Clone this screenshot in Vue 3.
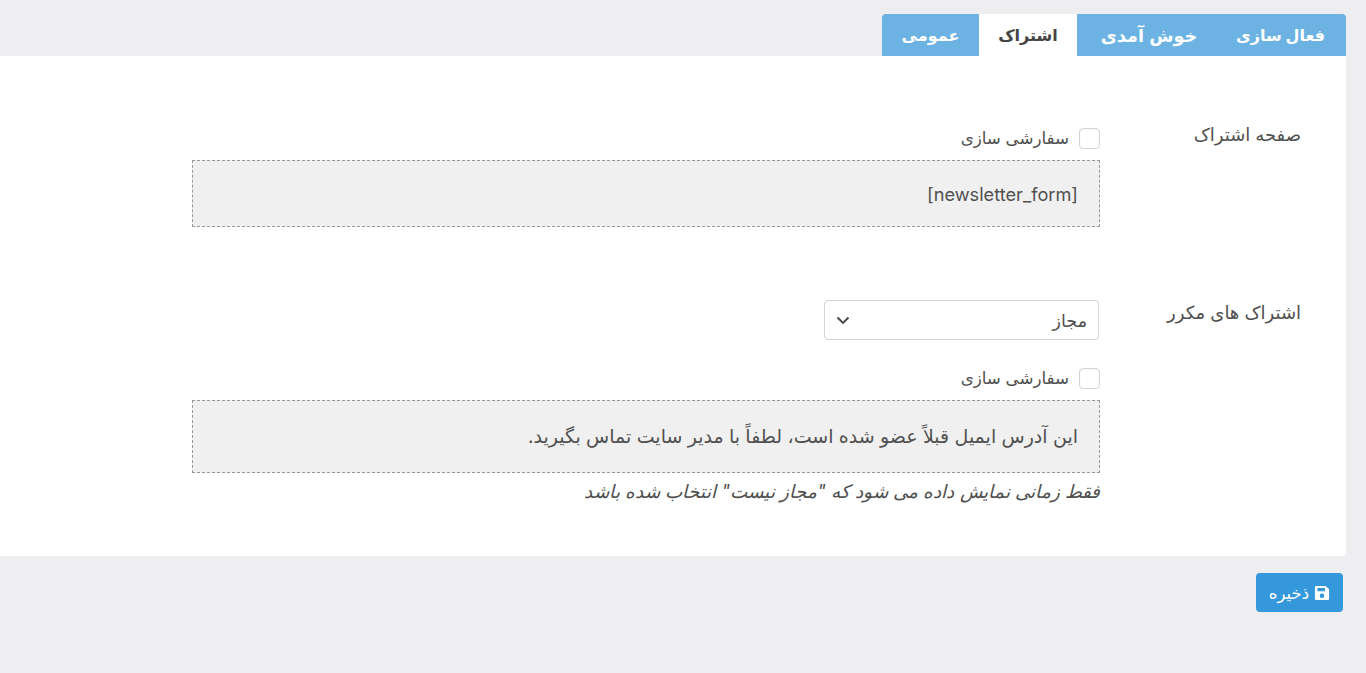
<script setup>
const tabs = [
  { name: "فعال سازی", active: false },
  { name: "خوش آمدی", active: false },
  { name: "اشتراک", active: true },
  { name: "عمومی", active: false },
]
</script>

<template>
  <div class="page" dir="rtl">
    <div class="tabs">
      <div v-for="tab in tabs" :key="tab.name" class="tab" :class="{ active: tab.active }">
        {{ tab.name }}
      </div>
    </div>

    <div class="panel">
      <div class="row first">
        <div class="label">صفحه اشتراک</div>
        <div class="field">
          <label class="check">
            <span class="box"></span>
            <span>سفارشی سازی</span>
          </label>
          <div class="preview short">[newsletter_form]</div>
        </div>
      </div>

      <div class="row second">
        <div class="label">اشتراک های مکرر</div>
        <div class="field">
          <div class="select">
            <span>مجاز</span>
            <svg width="14" height="14" viewBox="0 0 14 14" fill="none">
              <path d="M1.5 4.5 7 10l5.5-5.5" stroke="#444" stroke-width="1.8" />
            </svg>
          </div>
          <label class="check">
            <span class="box"></span>
            <span>سفارشی سازی</span>
          </label>
          <div class="preview tall">این آدرس ایمیل قبلاً عضو شده است، لطفاً با مدیر سایت تماس بگیرید.</div>
          <div class="hint">فقط زمانی نمایش داده می شود که "مجاز نیست" انتخاب شده باشد</div>
        </div>
      </div>
    </div>

    <div class="actions">
      <button class="save">
        <svg width="16" height="16" viewBox="0 0 14 14">
          <path fill="#fff" fill-rule="evenodd" d="M2 .8h8.2L13.2 3.8V12a1.2 1.2 0 0 1-1.2 1.2H2A1.2 1.2 0 0 1 .8 12V2A1.2 1.2 0 0 1 2 .8Zm1 1.9v2.8h6.6V2.7ZM7 7.4a2 2 0 1 0 0 4 2 2 0 0 0 0-4Z" />
        </svg>
        <span>ذخیره</span>
      </button>
    </div>
  </div>
</template>

<style scoped>
.page {
  height: 673px;
  background: #eeeef0;
  font-family: Inter, "DejaVu Sans", sans-serif;
  font-size: 18px;
  color: #505050;
  overflow: hidden;
}

.tabs {
  display: flex;
  margin: 14px 20px 0 0;
  height: 42px;
}

.tab {
  display: flex;
  align-items: center;
  justify-content: center;
  box-sizing: border-box;
  background: #6cb3e3;
  color: #fff;
  font-weight: bold;
  font-size: 16px;
  height: 42px;
  width: 98px;
}

.tab:nth-child(1) {
  width: 131px;
  border-top-right-radius: 4px;
}

.tab:nth-child(2) {
  width: 138px;
  padding-left: 6px;
  font-size: 17.6px;
  word-spacing: 1px;
}

.tab:nth-child(4) {
  width: 97px;
  border-top-left-radius: 4px;
}

.tab.active {
  background: #fff;
  color: #444;
}

.panel {
  margin-right: 20px;
  height: 500px;
  background: #fff;
  padding: 0 45px 0 0;
  border-bottom-right-radius: 4px;
}

.row {
  display: flex;
}

.row.first {
  padding-top: 66px;
}

.row.second {
  padding-top: 73px;
}

.label {
  width: 201px;
  flex-shrink: 0;
  line-height: 26px;
}

.field {
  width: 908px;
}

.check {
  display: flex;
  align-items: center;
  gap: 10px;
  height: 28px;
  margin-top: 2px;
  font-size: 16.7px;
}

.box {
  width: 19px;
  height: 19px;
  border: 1px solid #d4d4d4;
  border-radius: 4px;
  background: #fff;
  box-shadow: inset 0 1px 2px rgba(0, 0, 0, 0.05);
}

.preview {
  display: flex;
  align-items: center;
  margin-top: 8px;
  padding: 0 21px;
  background: #f0f0f0;
  border: 1px dashed #999;
  box-sizing: border-box;
}

.preview.short {
  height: 67px;
  padding-top: 1px;
  font-size: 18.2px;
}

.preview.tall {
  height: 73px;
  margin-top: 7px;
  font-size: 19px;
}

.select {
  display: flex;
  align-items: center;
  justify-content: space-between;
  width: 275px;
  height: 40px;
  margin-right: 1px;
  padding: 0 11px;
  box-sizing: border-box;
  background: #fff;
  border: 1px solid #d5d5d5;
  border-radius: 4px;
  margin-bottom: 23px;
  font-size: 17.5px;
}

.row.second .check {
  margin-top: 0;
  height: 30px;
}

.hint {
  font-style: italic;
  margin-top: 7px;
  line-height: 22px;
  font-size: 18.4px;
}

.actions {
  display: flex;
  padding: 17px 23px 0 0;
}

.save {
  display: flex;
  align-items: center;
  justify-content: center;
  gap: 5px;
  width: 87px;
  height: 39px;
  padding: 0;
  background: #3498db;
  color: #fff;
  border: 0;
  border-radius: 4px;
  font-family: inherit;
  font-size: 16.5px;
}
</style>

<style>
body {
  margin: 0;
}
</style>
